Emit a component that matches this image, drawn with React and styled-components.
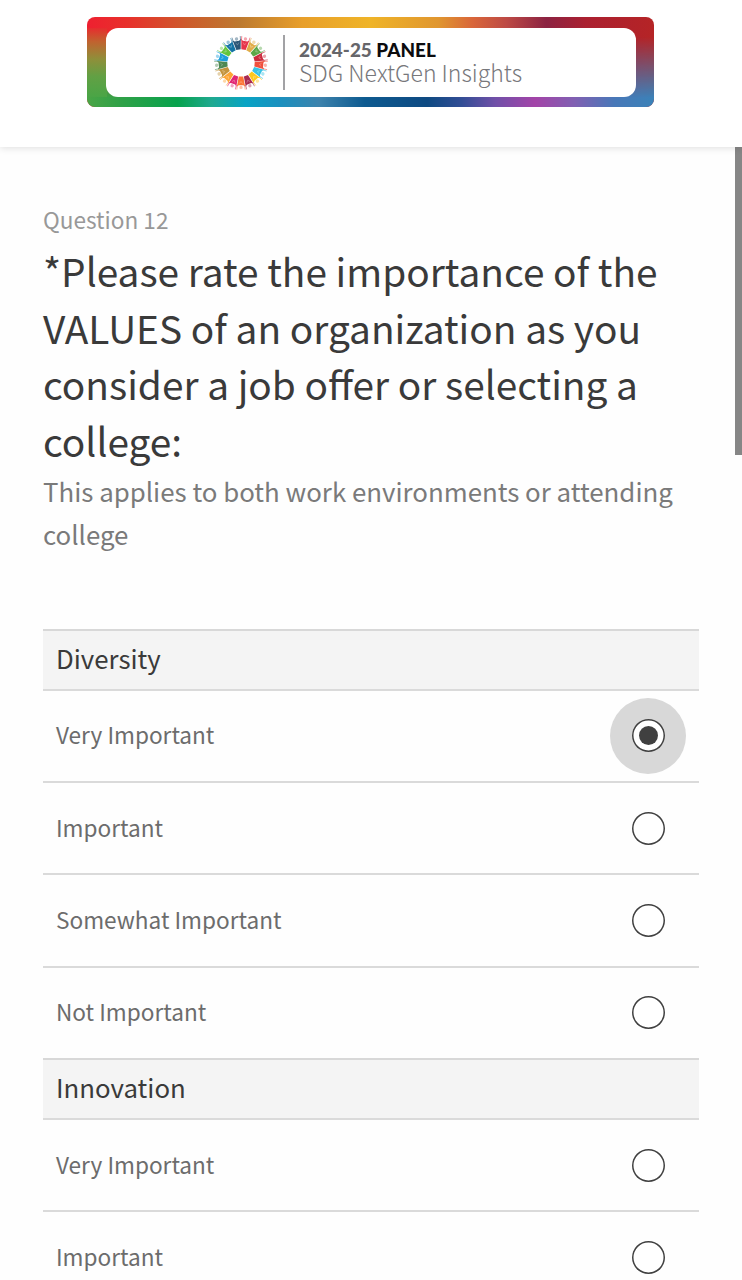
import React from "react";
import styled, { createGlobalStyle } from "styled-components";

const GlobalStyle = createGlobalStyle`
  * { box-sizing: border-box; }
  html, body { margin: 0; background: #fefefe; overflow: hidden; }
  body { font-family: "Noto Sans CJK JP", "Open Sans", sans-serif; color: #3a3a3a; }
`;

const Page = styled.div`
  display: flex;
  flex-direction: column;
  height: 1280px;
  width: 742px;
  overflow: hidden;
`;

const Header = styled.header`
  flex: none;
  height: 147px;
  padding: 17px 0 0 87px;
  background: #fff;
  box-shadow: 0 1px 7px rgba(0, 0, 0, 0.13);
  z-index: 1;
`;

const BannerFrame = styled.div`
  position: relative;
  width: 567px;
  height: 90px;
  padding: 11px 18px 10.5px 19px;
  border-radius: 8px;
  overflow: hidden;
  display: flex;
  background: linear-gradient(90deg, #ee2030 0%, #e8302b 7%, #cc5c2b 18%, #bd7a30 27%, #e89f2a 38%, #efb428 50%, #e0962f 62%, #d9663a 68%, #bd4a45 74%, #8c2342 81%, #ab2030 88%, #b52426 100%);

  &::before {
    content: "";
    position: absolute;
    inset: 0;
    background: linear-gradient(90deg, #4aa546 0%, #2fa147 6%, #07a24d 16%, #1fa990 22%, #08a3c4 28%, #1a90bf 34%, #3c82ac 41%, #0d5a90 49%, #0e4a82 60%, #314d95 66%, #7050a8 72%, #a344a8 79%, #8060b2 86%, #4878b8 93%, #3a82b8 100%);
    mask-image: linear-gradient(180deg, transparent 22%, #000 90%);
  }

  &::after {
    content: "";
    position: absolute;
    inset: 11px auto 10px 0;
    width: 20px;
    background: linear-gradient(180deg, #e62d2e 0%, #c0632f 20%, #8f8f3a 45%, #62a044 70%, #4aa546 100%);
  }
`;

const BannerBody = styled.div`
  position: relative;
  z-index: 1;
  flex: 1;
  display: flex;
  align-items: center;
  border-radius: 12px;
  background: #fff;
  padding-left: 107px;
`;

const BannerRule = styled.div`
  width: 2px;
  height: 55px;
  margin: 0 14px 0 14px;
  background: #a2a2a5;
`;

const BannerText = styled.div`
  display: flex;
  flex-direction: column;
  white-space: nowrap;
  padding-bottom: 2px;
`;

const BannerTitle = styled.div`
  font: 900 18.9px/23px Lato, sans-serif;
  color: #66666a;
  b { color: #0c0c0e; font-weight: 900; }
`;

const BannerName = styled.div`
  font-size: 23px;
  line-height: 23px;
  font-weight: 300;
  color: #77777b;
`;

const Main = styled.main`
  flex: none;
  display: flex;
  align-items: flex-start;
  justify-content: space-between;
`;

const Content = styled.div`
  width: 656px;
  margin: 57px 0 0 43px;
  white-space: nowrap;
`;

const QuestionNumber = styled.div`
  font-size: 22.6px;
  line-height: 32px;
  color: #989898;
`;

const QuestionTitle = styled.h1`
  margin: 6px 0 0;
  font-size: 38.8px;
  line-height: 56.5px;
  font-weight: 400;
  color: #3a3a3a;
`;

const QuestionHint = styled.p`
  margin: 0;
  padding: 1px 0 73px;
  font-size: 25.85px;
  line-height: 43.4px;
  color: #7a7a7a;
`;

const Group = styled.section`
  display: flex;
  flex-direction: column;
`;

const GroupTitle = styled.h2`
  margin: 0;
  height: 60px;
  padding-left: 13px;
  border-top: 2px solid #d8d8d8;
  background: #f4f4f4;
  font-size: 25.8px;
  line-height: 54px;
  font-weight: 400;
`;

const Option = styled.label`
  display: flex;
  align-items: center;
  justify-content: space-between;
  height: 92.3px;
  padding: 0 13px;
  border-top: 2px solid #dadada;
`;

const OptionText = styled.span`
  font-size: 22.6px;
  line-height: 32px;
  padding-bottom: 1px;
  color: #6c6c6c;
`;

const Halo = styled.span`
  display: flex;
  align-items: center;
  justify-content: center;
  width: 76px;
  height: 76px;
  border-radius: 50%;
  background: ${(p) => (p.$active ? "#d8d8d8" : "transparent")};
`;

const Radio = styled.span`
  display: flex;
  align-items: center;
  justify-content: center;
  width: 33px;
  height: 33px;
  box-shadow: inset 0 0 0 1.5px #404040;
  border-radius: 50%;
  background: #fff;
`;

const Dot = styled.span`
  width: 19px;
  height: 19px;
  border-radius: 50%;
  background: #404040;
`;

const ScrollThumb = styled.div`
  width: 7px;
  height: 308px;
  background: #868686;
`;

const WheelDrawing = styled.svg`
  flex: none;
  margin-top: 1px;
`;

const goalColors = [
  "#e5243b", "#dda63a", "#4c9f38", "#c5192d", "#ef402b", "#26bde2",
  "#fcc30b", "#a21942", "#fd6925", "#dd1367", "#fd9d24", "#bf8b2e",
  "#3f7e44", "#0a97d9", "#56c02b", "#00689d", "#19486a",
];

const GoalWheel = () => (
  <WheelDrawing width="56" height="56" viewBox="-28 -28 56 56">
    {goalColors.map((color, i) => (
      <g key={color} transform={`rotate(${10.6 + (i * 360) / 17})`}>
        <path d="M-2.2-13.6L-4.1-23.6L-2.3-22.3H2.3L4.1-23.6L2.2-13.6Z" fill={color} opacity="0.92" />
        <path d="M-3.7-22.5L-4.2-26.6M3.7-22.5L4.2-26.6" stroke={color} strokeWidth="0.9" opacity="0.55" />
        <circle cy="-24.4" r="1.7" fill={color} opacity="0.4" />
        <path d="M-1.6-20.5L0-18.5L1.6-20.5" fill="none" stroke="#fff" strokeWidth="0.6" opacity="0.45" />
      </g>
    ))}
  </WheelDrawing>
);

const allChoices = ["Very Important", "Important", "Somewhat Important", "Not Important"];
const groups = [
  { title: "Diversity", selected: 0, choices: allChoices },
  { title: "Innovation", selected: -1, choices: allChoices.slice(0, 2) },
];

export default function App() {
  return (
    <Page>
      <GlobalStyle />
      <Header>
        <BannerFrame>
          <BannerBody>
            <GoalWheel />
            <BannerRule />
            <BannerText>
              <BannerTitle>2024-25 <b>PANEL</b></BannerTitle>
              <BannerName>SDG NextGen Insights</BannerName>
            </BannerText>
          </BannerBody>
        </BannerFrame>
      </Header>
      <Main>
        <Content>
          <QuestionNumber>Question 12</QuestionNumber>
          <QuestionTitle>
            *Please rate the importance of the<br />
            VALUES of an organization as you<br />
            consider a job offer or selecting a<br />
            college:
          </QuestionTitle>
          <QuestionHint>
            This applies to both work environments or attending<br />
            college
          </QuestionHint>
          {groups.map((group) => (
            <Group key={group.title}>
              <GroupTitle>{group.title}</GroupTitle>
              {group.choices.map((choice, i) => (
                <Option key={choice}>
                  <OptionText>{choice}</OptionText>
                  <Halo $active={group.selected === i}>
                    <Radio>{group.selected === i && <Dot />}</Radio>
                  </Halo>
                </Option>
              ))}
            </Group>
          ))}
        </Content>
        <ScrollThumb />
      </Main>
    </Page>
  );
}
